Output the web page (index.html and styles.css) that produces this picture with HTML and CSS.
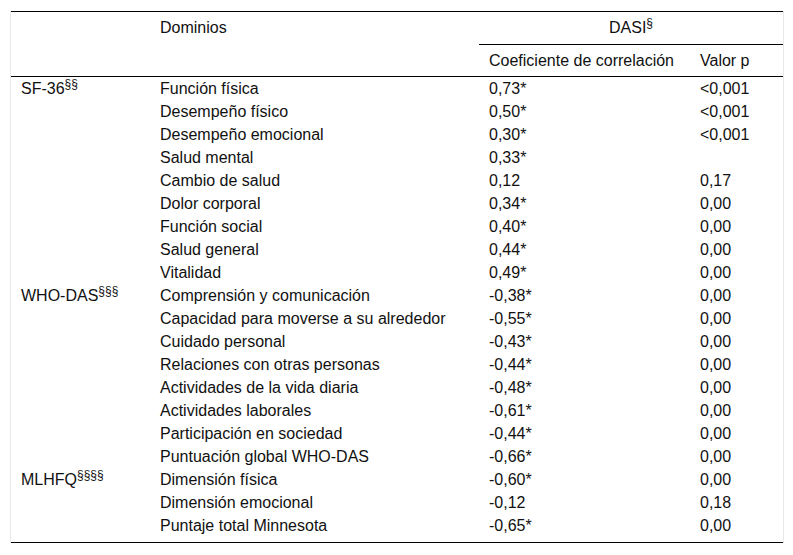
FILE: index.html
```html
<!DOCTYPE html>
<html lang="es">
<head>
<meta charset="utf-8">
<title>DASI</title>
<link rel="stylesheet" href="styles.css">
</head>
<body>
<div class="frame">
<table class="tbl">
<colgroup><col class="c1"><col class="c2"><col class="c3"><col class="c4"></colgroup>
<thead>
<tr class="h1">
<th></th>
<th>Dominios</th>
<th colspan="2" class="dasi">DASI<sup>§</sup></th>
</tr>
<tr class="h2">
<th></th>
<th></th>
<th>Coeficiente de correlación</th>
<th>Valor p</th>
</tr>
</thead>
<tbody>
<tr><td>SF-36<sup>§§</sup></td><td>Función física</td><td>0,73*</td><td>&lt;0,001</td></tr>
<tr><td></td><td>Desempeño físico</td><td>0,50*</td><td>&lt;0,001</td></tr>
<tr><td></td><td>Desempeño emocional</td><td>0,30*</td><td>&lt;0,001</td></tr>
<tr><td></td><td>Salud mental</td><td>0,33*</td><td></td></tr>
<tr><td></td><td>Cambio de salud</td><td>0,12</td><td>0,17</td></tr>
<tr><td></td><td>Dolor corporal</td><td>0,34*</td><td>0,00</td></tr>
<tr><td></td><td>Función social</td><td>0,40*</td><td>0,00</td></tr>
<tr><td></td><td>Salud general</td><td>0,44*</td><td>0,00</td></tr>
<tr><td></td><td>Vitalidad</td><td>0,49*</td><td>0,00</td></tr>
<tr><td>WHO-DAS<sup>§§§</sup></td><td>Comprensión y comunicación</td><td>-0,38*</td><td>0,00</td></tr>
<tr><td></td><td>Capacidad para moverse a su alrededor</td><td>-0,55*</td><td>0,00</td></tr>
<tr><td></td><td>Cuidado personal</td><td>-0,43*</td><td>0,00</td></tr>
<tr><td></td><td>Relaciones con otras personas</td><td>-0,44*</td><td>0,00</td></tr>
<tr><td></td><td>Actividades de la vida diaria</td><td>-0,48*</td><td>0,00</td></tr>
<tr><td></td><td>Actividades laborales</td><td>-0,61*</td><td>0,00</td></tr>
<tr><td></td><td>Participación en sociedad</td><td>-0,44*</td><td>0,00</td></tr>
<tr><td></td><td>Puntuación global WHO-DAS</td><td>-0,66*</td><td>0,00</td></tr>
<tr><td>MLHFQ<sup>§§§§</sup></td><td>Dimensión física</td><td>-0,60*</td><td>0,00</td></tr>
<tr><td></td><td>Dimensión emocional</td><td>-0,12</td><td>0,18</td></tr>
<tr class="last"><td></td><td>Puntaje total Minnesota</td><td>-0,65*</td><td>0,00</td></tr>
</tbody>
</table>
</div>
</body>
</html>
```
FILE: styles.css
```css
html, body {
  margin: 0;
  padding: 0;
  background: #fff;
}
body {
  font-family: "Liberation Sans", Arial, sans-serif;
  font-size: 16px;
  color: #111;
}
.frame {
  margin: 11px 0 0 10px;
  width: 772px;
  border-left: 1px solid #e8e8e8;
  border-right: 1px solid #e8e8e8;
}
.tbl {
  width: 772px;
  table-layout: fixed;
  border-collapse: collapse;
  border-top: 1px solid #000;
  border-bottom: 1px solid #000;
}
.c1 { width: 139px; }
.c2 { width: 329px; }
.c3 { width: 211px; }
.c4 { width: 93px; }
.tbl th {
  font-weight: normal;
  text-align: left;
  vertical-align: top;
  padding: 6px 10px 7px;
  line-height: 19px;
  height: 19px;
}
.tbl .h1 .dasi {
  text-align: center;
  border-bottom: 1px solid #000;
}
.tbl .h2 th {
  border-bottom: 1px solid #000;
  padding-top: 6px;
  padding-bottom: 6px;
}
.tbl td {
  padding: 2px 10px;
  line-height: 19px;
  vertical-align: top;
  white-space: nowrap;
}
.tbl .last td {
  padding-bottom: 7px;
}
sup {
  font-size: 12px;
  line-height: 0;
  vertical-align: 6px;
}
```
